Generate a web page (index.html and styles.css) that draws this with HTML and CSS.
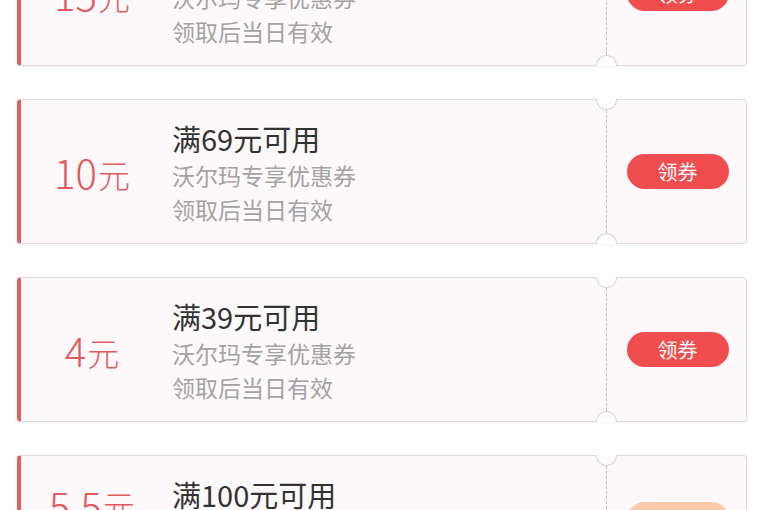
FILE: index.html
```html
<!DOCTYPE html>
<html lang="zh-CN">

<head>
    <meta charset="UTF-8">
    <title>优惠券</title>
    <link rel="stylesheet" href="styles.css">
</head>

<body>
    <div class="coupon_list">
        <div class="coupon">
            <div class="amount">15<span>元</span></div>
            <div class="info">
                <p class="title">满99元可用</p>
                <p class="desc">沃尔玛专享优惠券</p>
                <p class="desc">领取后当日有效</p>
            </div>
            <div class="stub">
                <i class="notch notch_top"></i>
                <i class="notch notch_bottom"></i>
                <button class="btn_get">领券</button>
            </div>
        </div>
        <div class="coupon">
            <div class="amount">10<span>元</span></div>
            <div class="info">
                <p class="title">满69元可用</p>
                <p class="desc">沃尔玛专享优惠券</p>
                <p class="desc">领取后当日有效</p>
            </div>
            <div class="stub">
                <i class="notch notch_top"></i>
                <i class="notch notch_bottom"></i>
                <button class="btn_get">领券</button>
            </div>
        </div>
        <div class="coupon">
            <div class="amount">4<span>元</span></div>
            <div class="info">
                <p class="title">满39元可用</p>
                <p class="desc">沃尔玛专享优惠券</p>
                <p class="desc">领取后当日有效</p>
            </div>
            <div class="stub">
                <i class="notch notch_top"></i>
                <i class="notch notch_bottom"></i>
                <button class="btn_get">领券</button>
            </div>
        </div>
        <div class="coupon">
            <div class="amount amount_top">5.5<span>元</span></div>
            <div class="info">
                <p class="title">满100元可用</p>
                <p class="desc">沃尔玛专享优惠券</p>
                <p class="desc">领取后当日有效</p>
            </div>
            <div class="stub">
                <i class="notch notch_top"></i>
                <i class="notch notch_bottom"></i>
                <button class="btn_get btn_light">领券</button>
            </div>
        </div>
    </div>
</body>

</html>
```

FILE: styles.css
```css
* {
    margin: 0px;
    padding: 0px;
    box-sizing: border-box;
}

body {
    background: white;
    font-family: "Noto Sans CJK SC", "Noto Sans", sans-serif;
    overflow: hidden;
}

.coupon_list {
    width: 730px;
    margin-left: 17px;
    margin-top: -79px;
    display: flex;
    flex-direction: column;
    gap: 33px;
}

.coupon {
    height: 145px;
    display: flex;
    background: #fdf9fa;
    border: 1px solid #e2d9db;
    border-left: 4px solid #e3605f;
    border-radius: 4px;
    box-shadow: 0 1px 2px rgba(0, 0, 0, 0.05);
}

.amount {
    width: 142px;
    display: flex;
    align-items: center;
    justify-content: center;
    color: #e05a5e;
    font-size: 40px;
    font-weight: 300;
    line-height: 1;
}

.amount span {
    font-size: 32px;
    margin-left: 1px;
    margin-top: 4px;
}

.amount_top {
    align-items: flex-start;
    padding-top: 29px;
}

.info {
    flex: 1;
    padding-top: 18px;
    padding-left: 9px;
}

.title {
    color: #333333;
    font-size: 29px;
    line-height: 40px;
}

.desc {
    color: #a3a3a3;
    font-size: 23px;
    line-height: 34px;
}

.stub {
    width: 140px;
    position: relative;
    border-left: 1px dashed #c4bbbd;
    display: flex;
    align-items: center;
    justify-content: center;
}

.notch {
    position: absolute;
    left: -11px;
    width: 21px;
    height: 11px;
    background: white;
    border: 1px solid #d9d0d2;
}

.notch_top {
    top: -1px;
    border-top: none;
    border-radius: 0 0 11px 11px;
}

.notch_bottom {
    bottom: -1px;
    border-bottom: none;
    border-radius: 11px 11px 0 0;
}

.btn_get {
    width: 102px;
    height: 35px;
    border: none;
    border-radius: 18px;
    background: #ef4d4f;
    color: white;
    font-family: "Noto Sans CJK SC", sans-serif;
    font-size: 20px;
    margin-left: 2px;
}

.btn_light {
    background: #fbcba9;
    margin-bottom: 16px;
}
```
